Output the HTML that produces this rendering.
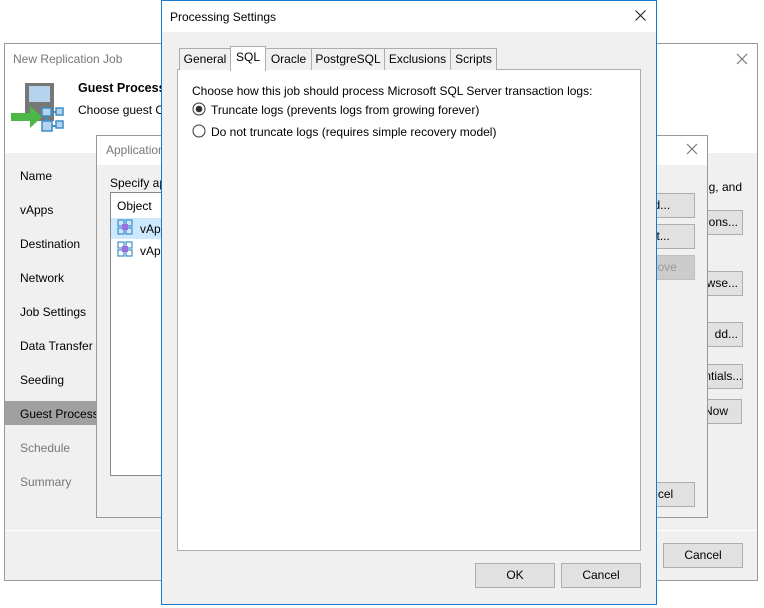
<!DOCTYPE html>
<html><head><style>
*{box-sizing:border-box;margin:0;padding:0}
body{width:764px;height:608px;background:#fff;position:relative;overflow:hidden;font-family:"Liberation Sans",sans-serif;font-size:12px;color:#000}
.a{position:absolute}
.btn{position:absolute;background:#e1e1e1;border:1px solid #adadad;text-align:center;line-height:23px;font-size:12px;overflow:hidden;white-space:nowrap}
.t{position:absolute;white-space:nowrap}
.tab{position:absolute;top:48px;height:22px;background:#f0f0f0;border:1px solid #adadad;border-bottom:none;text-align:center;line-height:21px}
.r{text-align:right;padding-right:4px}
.l{text-align:left;padding-left:1px}
</style></head><body>
<!-- back window -->
<div class="a" style="left:4px;top:43px;width:754px;height:538px;border:1px solid #999;background:#f0f0f0"></div>
<div class="a" style="left:5px;top:44px;width:752px;height:109px;background:#fff"></div>
<div class="t" style="left:13px;top:52px;color:#777">New Replication Job</div>
<svg class="a" style="left:736px;top:53px" width="12" height="12"><path d="M1 1L11 11M11 1L1 11" stroke="#777" stroke-width="1.2"/></svg>
<!-- icon -->
<div class="a" style="left:25px;top:83px;width:29px;height:38px;background:#777"></div>
<div class="a" style="left:29px;top:86px;width:21px;height:16px;background:#b6d3ee"></div>
<svg class="a" style="left:10px;top:100px" width="56" height="34"><path d="M1 13h19v-7l12 11-12 11v-7H1z" fill="#4cb848"/><g fill="#b6d3ee" stroke="#3c8dc8" stroke-width="1.5"><path d="M41 12h5v0M37 17v4M41 26h5" stroke-width="2"/><rect x="32" y="8" width="9" height="8"/><rect x="46" y="8" width="7" height="7"/><rect x="32" y="21" width="10" height="10"/><rect x="46" y="21" width="7" height="7"/></g></svg>
<div class="t" style="left:78px;top:81px;font-weight:bold;font-size:12.5px">Guest Processing</div>
<div class="t" style="left:78px;top:103px">Choose guest OS</div>
<div class="t" style="left:20px;top:169px">Name</div>
<div class="t" style="left:20px;top:203px">vApps</div>
<div class="t" style="left:20px;top:237px">Destination</div>
<div class="t" style="left:20px;top:271px">Network</div>
<div class="t" style="left:20px;top:305px">Job Settings</div>
<div class="t" style="left:20px;top:339px">Data Transfer</div>
<div class="t" style="left:20px;top:373px">Seeding</div>
<div class="a" style="left:5px;top:401px;width:92px;height:24px;background:#a0a0a0"></div>
<div class="t" style="left:20px;top:407px">Guest Processing</div>
<div class="t" style="left:20px;top:441px;color:#777">Schedule</div>
<div class="t" style="left:20px;top:475px;color:#777">Summary</div>
<div class="a" style="left:5px;top:530px;width:752px;height:1px;background:#fff"></div>
<div class="t" style="right:22px;top:180px">ing, and</div>
<div class="btn r" style="left:690px;top:210px;width:53px">ptions...</div>
<div class="btn r" style="left:690px;top:271px;width:53px">owse...</div>
<div class="btn r" style="left:690px;top:322px;width:53px">dd...</div>
<div class="btn r" style="left:690px;top:364px;width:53px">dentials...</div>
<div class="btn r" style="left:690px;top:399px;width:52px;padding-right:13px">Now</div>
<div class="btn" style="left:663px;top:543px;width:80px">Cancel</div>
<!-- application dialog -->
<div class="a" style="left:96px;top:135px;width:612px;height:383px;border:1px solid #999;background:#f0f0f0"></div>
<div class="a" style="left:97px;top:136px;width:610px;height:29px;background:#fff"></div>
<div class="t" style="left:106px;top:143px;color:#777">Application</div>
<svg class="a" style="left:686px;top:143px" width="12" height="12"><path d="M1 1L11 11M11 1L1 11" stroke="#777" stroke-width="1.2"/></svg>
<div class="t" style="left:110px;top:176px">Specify application</div>
<div class="a" style="left:110px;top:192px;width:60px;height:284px;border:1px solid #888;background:#fff"></div>
<div class="t" style="left:117px;top:199px">Object</div>
<div class="a" style="left:111px;top:218px;width:59px;height:21px;background:#cce8ff"></div>
<svg class="a" style="left:117px;top:219px" width="18" height="40"><g fill="none" stroke="#3c8dc8" stroke-width="1.2"><rect x="1" y="1" width="6" height="6"/><rect x="9" y="1" width="6" height="6"/><rect x="1" y="9" width="6" height="6"/><rect x="9" y="9" width="6" height="6"/><rect x="1" y="23" width="6" height="6"/><rect x="9" y="23" width="6" height="6"/><rect x="1" y="31" width="6" height="6"/><rect x="9" y="31" width="6" height="6"/></g><rect x="5" y="5" width="6" height="6" fill="#9a70e0"/><rect x="5" y="27" width="6" height="6" fill="#9a70e0"/></svg>
<div class="t" style="left:140px;top:222px">vApp</div>
<div class="t" style="left:140px;top:244px">vApp</div>
<div class="btn" style="left:614px;top:193px;width:81px">Add...</div>
<div class="btn" style="left:614px;top:224px;width:81px">Edit...</div>
<div class="btn" style="left:614px;top:255px;width:81px;background:#ccc;border-color:#bfbfbf;color:#999">Remove</div>
<div class="btn" style="left:614px;top:482px;width:81px">Cancel</div>
<!-- processing settings -->
<div class="a" style="left:161px;top:0;width:496px;height:605px;border:1px solid #1979ca;background:#f0f0f0"></div>
<div class="a" style="left:162px;top:1px;width:494px;height:31px;background:#fff"></div>
<div class="t" style="left:170px;top:10px">Processing Settings</div>
<svg class="a" style="left:635px;top:10px" width="11" height="11"><path d="M0.5 0.5L10.5 10.5M10.5 0.5L0.5 10.5" stroke="#222" stroke-width="1.1"/></svg>
<div class="a" style="left:177px;top:69px;width:464px;height:482px;border:1px solid #adadad;background:#fff"></div>
<div class="tab" style="left:179px;width:52px">General</div>
<div class="tab" style="left:265px;width:47px">Oracle</div>
<div class="tab" style="left:311px;width:74px">PostgreSQL</div>
<div class="tab" style="left:384px;width:67px">Exclusions</div>
<div class="tab" style="left:450px;width:47px">Scripts</div>
<div class="tab" style="left:230px;top:46px;height:25px;width:36px;background:#fff">SQL</div>
<div class="t" style="left:192px;top:84px">Choose how this job should process Microsoft SQL Server transaction logs:</div>
<svg class="a" style="left:192px;top:102px" width="14" height="36"><circle cx="7" cy="7" r="6" fill="#fff" stroke="#333"/><circle cx="7" cy="7" r="3.3" fill="#333"/><circle cx="7" cy="29" r="6" fill="#fff" stroke="#333"/></svg>
<div class="t" style="left:211px;top:103px">Truncate logs (prevents logs from growing forever)</div>
<div class="t" style="left:211px;top:125px">Do not truncate logs (requires simple recovery model)</div>
<div class="btn" style="left:475px;top:563px;width:80px">OK</div>
<div class="btn" style="left:561px;top:563px;width:80px">Cancel</div>
</body></html>
